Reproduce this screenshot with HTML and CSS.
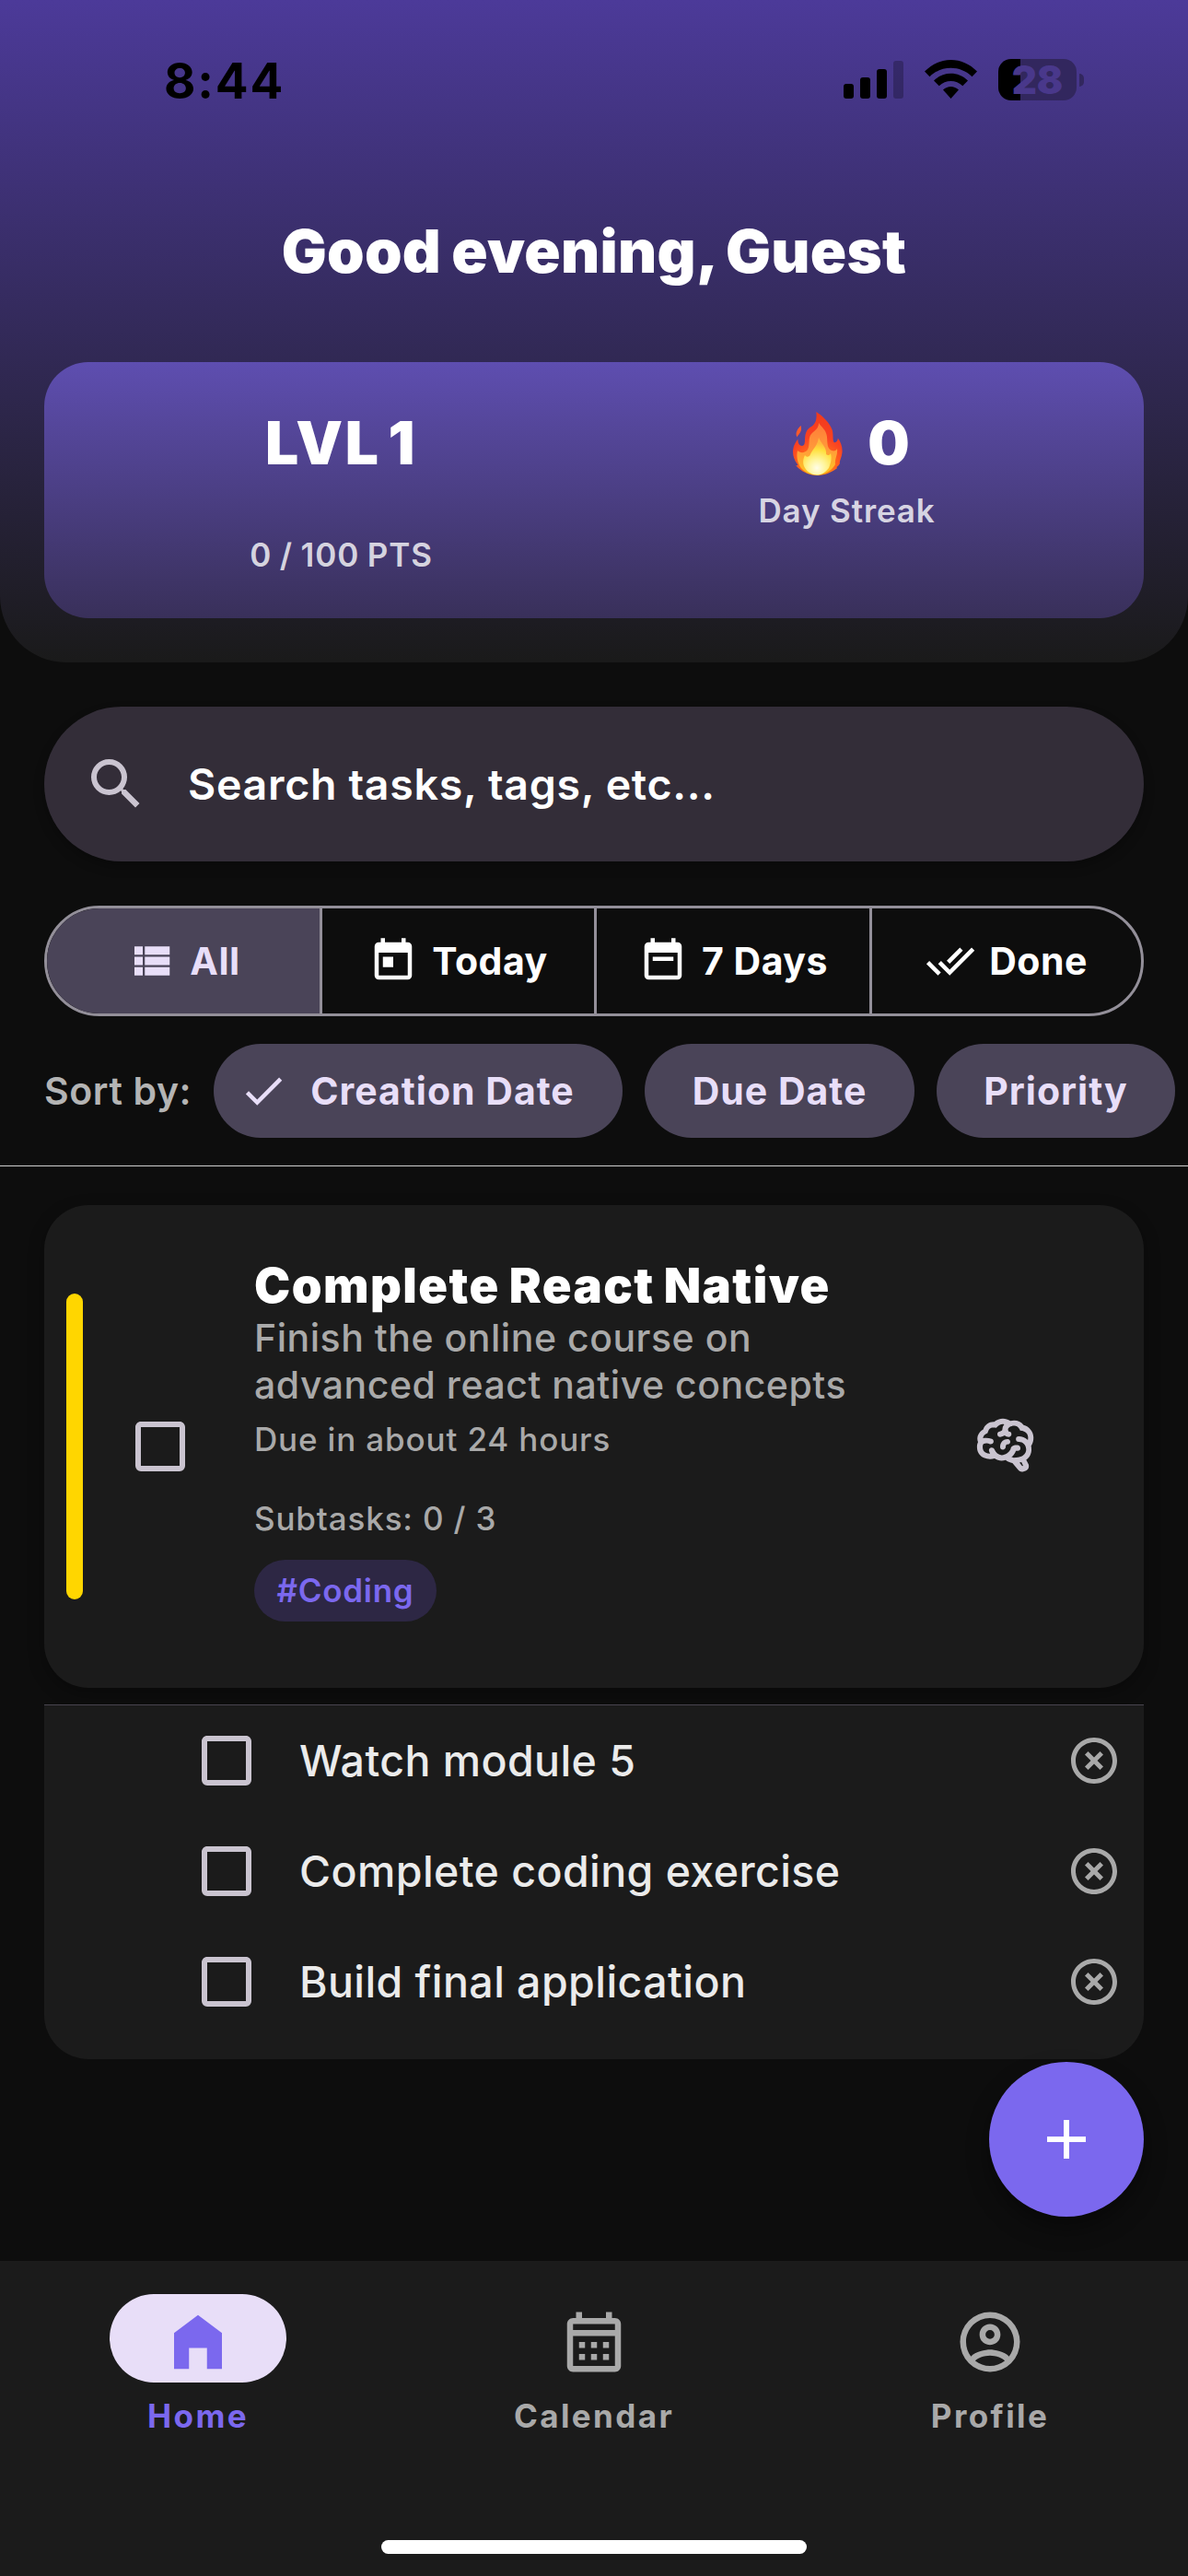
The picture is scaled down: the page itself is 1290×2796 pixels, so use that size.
FILE: index.html
```html
<!DOCTYPE html>
<html lang="en">
<head>
<meta charset="utf-8">
<title>Tasks</title>
<link rel="stylesheet" href="styles.css">
</head>
<body>
<svg class="defs" aria-hidden="true">
  <defs>
    <symbol id="box" viewBox="0 0 24 24"><path d="M19,3H5C3.89,3 3,3.89 3,5V19A2,2 0 0,0 5,21H19A2,2 0 0,0 21,19V5C21,3.89 20.1,3 19,3M19,5V19H5V5H19Z"/></symbol>
    <symbol id="remove" viewBox="0 0 24 24"><path d="M12,20C7.59,20 4,16.41 4,12C4,7.59 7.59,4 12,4C16.41,4 20,7.59 20,12C20,16.41 16.41,20 12,20M12,2C6.47,2 2,6.47 2,12C2,17.53 6.47,22 12,22C17.53,22 22,17.53 22,12C22,6.47 17.53,2 12,2M14.59,8L12,10.59L9.41,8L8,9.41L10.59,12L8,14.59L9.41,16L12,13.41L14.59,16L16,14.59L13.41,12L16,9.41L14.59,8Z"/></symbol>
  </defs>
</svg>
<div class="screen">
  <header class="hero">
    <div class="status">
      <span class="clock">8:44</span>
      <div class="status-icons">
        <svg class="signal" viewBox="0 0 65 41"><rect y="25" width="11" height="16" rx="3"/><rect x="18" y="18" width="11" height="23" rx="3"/><rect x="36" y="9" width="11" height="32" rx="3"/><rect x="54" width="11" height="41" rx="3" opacity=".25"/></svg>
        <svg class="wifi" viewBox="0 0 57 42"><path d="M0 12.6C16-4.200 41-4.200 57 12.600L51.500 18.200C39 5.500 18 5.500 5.500 18.200ZM10 22.500C20.500 12.200 36.500 12.200 47 22.500L41.300 28.300C34 21.200 23 21.200 15.700 28.300ZM20 32.500C25 27.700 32 27.700 37 32.500L28.500 42Z"/></svg>
        <div class="battery"><span class="battery-cell">28</span><span class="battery-tip"></span></div>
      </div>
    </div>
    <h1 class="greeting">Good evening, Guest</h1>
    <section class="stats">
      <div class="stat stat-level">
        <div class="stat-value level">LVL 1</div>
        <div class="stat-label pts">0 / 100 PTS</div>
      </div>
      <div class="stat">
        <div class="stat-value streak">
          <svg class="flame" viewBox="0 0 54 69" role="img" aria-label="fire">
            <defs>
              <radialGradient id="fo" gradientUnits="userSpaceOnUse" cx="27" cy="60" r="60"><stop offset="0" stop-color="#ffb000"/><stop offset=".3" stop-color="#ff6a1c"/><stop offset=".55" stop-color="#fa4222"/><stop offset="1" stop-color="#f03a1c"/></radialGradient>
              <linearGradient id="fm" x1="0" y1="0" x2="0" y2="1"><stop offset="0" stop-color="#ff7a38"/><stop offset=".5" stop-color="#ff9a3a"/><stop offset="1" stop-color="#ffc822"/></linearGradient>
              <radialGradient id="fi" gradientUnits="userSpaceOnUse" cx="26" cy="61" r="27"><stop offset="0" stop-color="#fffde8"/><stop offset=".35" stop-color="#fff59a"/><stop offset=".75" stop-color="#ffdf3c"/><stop offset="1" stop-color="#ffb83c"/></radialGradient>
            </defs>
            <path fill="url(#fo)" d="M25.300 0C33 5 40 12 42.800 20C44 25 43 30 44.500 33C47 34 49 31 48.800 28.500C52 33 54 38 53.500 44C53 50 50 54 51 56C50 58 48.500 59 47.500 60C48 61 48 61.500 47.500 61.500C41 66.500 33 69 26 69C18 69 9 65 3 58C5 58.500 5.500 58 5 57C1 52 -.500 46 .200 41C.800 36 3 33 5.500 29.500C5 34 7 37 10 37C14 36.500 12.500 31 13.500 25C15 18 19 17 22 14.500C25.500 11 26 6 25.300 0Z"/>
            <path fill="url(#fm)" d="M28 12C31 17 36 19 37 27C37.500 34 37 40 42 42C45 43 47 42 48 40C49 47 45 51 46 57C42 64 34 68.500 26 68.500C17 68.500 10 64 7 58C4 52 4 46 5 42C8 45 13 45 16 41C19 36 16 28 20 24C24 20 28 18 28 12Z"/>
            <path fill="url(#fi)" d="M28 28C30 34 37 38 36 46C38 48 40 47 41 45C43 52 40 58 39 61C35 66 31 68.500 26 68.500C20 68.500 14 64 12 59C10 54 12 49 13 47C15 50 18 49 19 46C22 40 27 36 28 28Z"/>
            <path fill="#ff5a2a" d="M8.600 15C9.800 19.500 8.500 22 6.500 24.500C5 26 4.600 27 4.500 27.500C2 23 5 18.500 8.600 15Z"/>
          </svg>
          <span>0</span>
        </div>
        <div class="stat-label day">Day Streak</div>
      </div>
    </section>
  </header>

  <main class="content">
    <div class="search">
      <svg class="i-search" viewBox="0 0 24 24"><path d="M9.500,3A6.500,6.500 0 0,1 16,9.500C16,11.110 15.410,12.590 14.440,13.730L14.710,14H15.500L20.500,19L19,20.500L14,15.500V14.710L13.730,14.440C12.590,15.410 11.110,16 9.500,16A6.500,6.500 0 0,1 3,9.500A6.500,6.500 0 0,1 9.500,3M9.500,5C7,5 5,7 5,9.500C5,12 7,14 9.500,14C12,14 14,12 14,9.500C14,7 12,5 9.500,5Z"/></svg>
      <span class="placeholder">Search tasks, tags, etc...</span>
    </div>

    <div class="segments">
      <div class="segment active"><svg class="i-sm" viewBox="0 0 24 24"><path d="M9,5V9H21V5M9,19H21V15H9M9,14H21V10H9M4,9H8V5H4M4,19H8V15H4M4,14H8V10H4V14Z"/></svg><span>All</span></div>
      <div class="segment"><svg class="i-sm" viewBox="0 0 24 24"><path d="M7,10H12V15H7M19,19H5V8H19M19,3H18V1H16V3H8V1H6V3H5C3.890,3 3,3.900 3,5V19A2,2 0 0,0 5,21H19A2,2 0 0,0 21,19V5A2,2 0 0,0 19,3Z"/></svg><span>Today</span></div>
      <div class="segment"><svg class="i-sm" viewBox="0 0 24 24"><path d="M7,10H17V12H7M19,19H5V8H19M19,3H18V1H16V3H8V1H6V3H5C3.890,3 3,3.900 3,5V19A2,2 0 0,0 5,21H19A2,2 0 0,0 21,19V5A2,2 0 0,0 19,3Z"/></svg><span>7 Days</span></div>
      <div class="segment"><svg class="i-sm" viewBox="0 0 24 24"><path d="M0.410,13.410L6,19L7.410,17.580L1.830,12M22.240,5.580L11.660,16.170L7.500,12L6.070,13.410L11.660,19L23.660,7M18,7L16.590,5.580L10.240,11.930L11.660,13.340L18,7Z"/></svg><span>Done</span></div>
    </div>

    <div class="sort">
      <span class="sort-label">Sort by:</span>
      <div class="chip chip-on"><svg class="i-sm" viewBox="0 0 24 24"><path d="M21,7L9,19L3.500,13.500L4.910,12.090L9,16.170L19.590,5.590L21,7Z"/></svg><span>Creation Date</span></div>
      <div class="chip chip-due"><span>Due Date</span></div>
      <div class="chip chip-pri"><span>Priority</span></div>
    </div>

    <article class="task">
      <span class="priority"></span>
      <svg class="check"><use href="#box"/></svg>
      <div class="task-body">
        <h2 class="task-title">Complete React Native</h2>
        <p class="task-desc">Finish the online course on<br>advanced react native concepts</p>
        <p class="task-meta due">Due in about 24 hours</p>
        <p class="task-meta count">Subtasks: 0 / 3</p>
        <span class="tag">#Coding</span>
      </div>
      <svg class="brain" viewBox="0 0 24 24"><path d="M21.330,12.910C21.420,14.460 20.710,15.950 19.440,16.860L20.210,18.350C20.440,18.800 20.470,19.330 20.270,19.800C20.080,20.270 19.690,20.640 19.210,20.800L18.420,21.050C18.250,21.110 18.060,21.140 17.880,21.140C17.370,21.140 16.890,20.910 16.560,20.500L14.440,18C13.550,17.850 12.710,17.470 12,16.900C11.500,17.050 11,17.130 10.500,17.130C9.620,17.130 8.740,16.860 8,16.340C7.470,16.500 6.930,16.570 6.380,16.560C5.590,16.570 4.810,16.410 4.080,16.110C2.650,15.470 1.700,14.070 1.650,12.500C1.570,11.780 1.690,11.050 2,10.390C1.710,9.640 1.680,8.820 1.930,8.060C2.300,7.110 3,6.320 3.870,5.820C4.450,4.130 6.080,3 7.870,3.120C9.470,1.620 11.920,1.460 13.700,2.750C14.120,2.640 14.560,2.580 15,2.580C16.360,2.550 17.650,3.150 18.500,4.220C20.540,4.750 22,6.570 22.080,8.690C22.130,9.800 21.830,10.890 21.220,11.820C21.290,12.180 21.330,12.540 21.330,12.910M16.330,11.500C16.900,11.570 17.350,12 17.350,12.570A1,1 0 0,1 16.350,13.570H15.720C15.400,14.470 14.840,15.260 14.100,15.860C14.350,15.950 14.610,16 14.870,16.070C20,16 19.400,12.870 19.400,12.820C19.340,11.390 18.140,10.270 16.710,10.330A1,1 0 0,1 15.710,9.330A1,1 0 0,1 16.710,8.330C17.940,8.360 19.120,8.820 20.040,9.630C20.090,9.340 20.120,9.040 20.120,8.740C20.060,7.500 19.500,6.420 17.250,6.210C16,3.250 12.850,4.890 12.850,5.810V5.810C12.820,6.040 13.060,6.530 13.100,6.560A1,1 0 0,1 14.100,7.560C14.100,8.110 13.650,8.560 13.100,8.560V8.560C12.570,8.540 12.070,8.340 11.670,8C11.190,8.310 10.640,8.500 10.070,8.560V8.560C9.500,8.610 9.030,8.210 9,7.660C8.920,7.100 9.330,6.610 9.880,6.560C10.040,6.540 10.820,6.420 10.820,5.790V5.790C10.820,5.130 11.070,4.500 11.500,4C10.580,3.750 9.590,4.080 8.590,5.290C6.750,5 6,5.250 5.450,7.200C4.500,7.670 4,8 3.780,9C4.860,8.780 5.970,8.870 7,9.250C7.500,9.440 7.780,10 7.590,10.540C7.400,11.060 6.820,11.320 6.300,11.130C5.570,10.810 4.750,10.790 4,11.070C3.680,11.340 3.680,11.900 3.680,12.340C3.680,13.080 4.050,13.770 4.680,14.170C5.210,14.440 5.800,14.580 6.390,14.570C6.240,14.310 6.110,14.040 6,13.760C5.810,13.220 6.100,12.630 6.640,12.440C7.180,12.250 7.770,12.540 7.960,13.080C8.360,14.220 9.380,15 10.580,15.130C11.950,15.060 13.170,14.250 13.770,13C14,11.620 15.110,11.500 16.330,11.500M18.330,18.970L17.710,17.670L17,17.830L18,19.080L18.330,18.970M13.680,10.360C13.700,9.830 13.300,9.380 12.770,9.330C12.060,9.290 11.370,9.530 10.840,10C10.270,10.580 9.970,11.380 10,12.190A1,1 0 0,0 11,13.190C11.570,13.190 12,12.740 12,12.190C12,11.920 12.070,11.650 12.230,11.430C12.350,11.330 12.500,11.280 12.680,11.280C13.200,11.310 13.680,10.900 13.680,10.360Z"/></svg>
    </article>

    <ul class="subtasks">
      <li class="subtask"><svg class="check"><use href="#box"/></svg><span>Watch module 5</span><svg class="remove"><use href="#remove"/></svg></li>
      <li class="subtask"><svg class="check"><use href="#box"/></svg><span>Complete coding exercise</span><svg class="remove"><use href="#remove"/></svg></li>
      <li class="subtask"><svg class="check"><use href="#box"/></svg><span>Build final application</span><svg class="remove"><use href="#remove"/></svg></li>
    </ul>
    <button class="fab" aria-label="Add task"><svg viewBox="0 0 24 24"><path d="M19,13H13V19H11V13H5V11H11V5H13V11H19V13Z"/></svg></button>
  </main>

  <footer class="bottom">
    <nav class="tabs">
      <div class="tab selected"><div class="tab-icon"><svg viewBox="0 0 24 24"><path d="M4,21V9L12,3L20,9V21H15V14H9V21H4Z"/></svg></div><span>Home</span></div>
      <div class="tab"><div class="tab-icon"><svg viewBox="0 -1 24 24"><path d="M7 11H9V13H7V11M21 5V19C21 20.110 20.110 21 19 21H5C3.890 21 3 20.100 3 19V5C3 3.900 3.900 3 5 3H6V1H8V3H16V1H18V3H19C20.110 3 21 3.900 21 5M5 7H19V5H5V7M19 19V9H5V19H19M15 13V11H17V13H15M11 13V11H13V13H11M7 15H9V17H7V15M15 17V15H17V17H15M11 17V15H13V17H11Z"/></svg></div><span>Calendar</span></div>
      <div class="tab"><div class="tab-icon"><svg viewBox="0 0 24 24"><path d="M12,2A10,10 0 0,0 2,12A10,10 0 0,0 12,22A10,10 0 0,0 22,12A10,10 0 0,0 12,2M7.070,18.280C7.500,17.380 10.120,16.500 12,16.500C13.880,16.500 16.500,17.380 16.930,18.280C15.570,19.360 13.860,20 12,20C10.140,20 8.430,19.360 7.070,18.280M18.360,16.830C16.930,15.090 13.460,14.500 12,14.500C10.540,14.500 7.070,15.090 5.640,16.830C4.620,15.500 4,13.820 4,12C4,7.590 7.590,4 12,4C16.410,4 20,7.590 20,12C20,13.820 19.380,15.500 18.360,16.830M12,6C10.060,6 8.500,7.560 8.500,9.500C8.500,11.440 10.060,13 12,13C13.940,13 15.500,11.440 15.500,9.500C15.500,7.560 13.940,6 12,6M12,11A1.500,1.500 0 0,1 10.500,9.500A1.500,1.500 0 0,1 12,8A1.500,1.500 0 0,1 13.500,9.500A1.500,1.500 0 0,1 12,11Z"/></svg></div><span>Profile</span></div>
    </nav>
    <div class="home-indicator"></div>
  </footer>
</div>
</body>
</html>
```
FILE: styles.css
```css
* { box-sizing: border-box; margin: 0; padding: 0; }
body { background: #0d0d0d; font-family: Inter, "Liberation Sans", sans-serif; color: #fff; }
svg { display: block; fill: currentColor; flex: none; }
.defs { position: absolute; width: 0; height: 0; }
.screen { width: 1290px; height: 2796px; display: flex; flex-direction: column; overflow: hidden; white-space: nowrap; }

.hero { height: 719px; padding: 0 48px 48px; border-radius: 0 0 72px 72px; background: linear-gradient(#4c3a99, #1a1a1a); display: flex; flex-direction: column; }
.status { height: 174px; padding: 0 65px 0 130px; display: flex; justify-content: space-between; color: #000; }
.clock { margin-top: 58px; font-size: 53px; line-height: 60px; font-weight: 700; letter-spacing: 1.800px; }
.status-icons { display: flex; align-items: flex-start; }
.signal { width: 65px; height: 41px; margin-top: 66px; }
.wifi { width: 57px; height: 42px; margin: 65px 23px 0; }
.battery { margin-top: 64px; display: flex; align-items: center; gap: 3px; }
.battery-cell { width: 85px; height: 45px; border-radius: 14px; background: linear-gradient(90deg, #000 24px, #32275e 24px); color: #49388b; font-size: 42px; line-height: 45px; font-weight: 900; text-align: center; }
.battery-tip { width: 5px; height: 14px; border-radius: 0 5px 5px 0; background: #32275e; }
.greeting { margin-top: 59px; font-size: 65px; line-height: 80px; font-weight: 900; text-align: center; letter-spacing: .300px; word-spacing: -2px; }
.stats { margin-top: auto; height: 278px; padding: 48px 48px 0; border-radius: 48px; background: linear-gradient(#5e4eb0, #39305a); display: grid; grid-template-columns: 1fr 1fr; }
.stat { display: flex; flex-direction: column; align-items: center; }
.stat-value { height: 80px; line-height: 80px; font-size: 64px; font-weight: 900; display: flex; align-items: center; }
.level { letter-spacing: 2.500px; word-spacing: -7px; }
.streak { gap: 27px; margin-left: 10px; }
.flame { width: 54px; height: 69px; }
.stat-label { margin-top: 9px; font-size: 35px; line-height: 48px; font-weight: 560; color: rgba(255,255,255,.8); letter-spacing: .850px; }
.pts { margin-top: 57px; word-spacing: -1px; }

.content { position: relative; height: 1735px; padding-top: 48px; display: flex; flex-direction: column; }
.search { margin: 0 48px; height: 168px; padding-left: 48px; border-radius: 84px; background: #332d38; box-shadow: 0 6px 12px rgba(0,0,0,.25); display: flex; align-items: center; }
.i-search { width: 72px; height: 72px; margin-left: -6px; color: #cac4d0; }
.placeholder { margin-left: 42px; font-size: 46.500px; font-weight: 570; letter-spacing: .700px; }
.segments { margin: 48px 48px 0; height: 120px; border: 3px solid #938f99; border-radius: 60px; overflow: hidden; display: grid; grid-template-columns: 299px 298px 299px 1fr; }
.segment { display: flex; align-items: center; justify-content: center; gap: 15px; font-size: 41px; font-weight: 680; letter-spacing: .500px; border-right: 3px solid #938f99; }
.segment:last-child { border-right: 0; }
.active { background: #4a4458; color: #e8def8; }
.i-sm { width: 54px; height: 54px; }
.sort { height: 163px; padding: 30px 0 0 48px; border-bottom: 1px solid #d0d0d0; display: flex; font-size: 41px; line-height: 102px; font-weight: 670; color: #e8def8; letter-spacing: 1px; }
.sort-label { width: 184px; flex: none; font-weight: 600; color: #b4b4b4; letter-spacing: .600px; }
.chip { height: 102px; margin-right: 24px; border-radius: 51px; background: #4a4458; display: flex; align-items: center; justify-content: center; flex: none; }
.chip-on { width: 444px; gap: 24px; padding-right: 25px; }
.chip-due { width: 293px; }
.chip-pri { width: 259px; margin-right: 0; }

.task { margin: 42px 48px 0; height: 524px; padding: 0 114px 0 24px; border-radius: 48px; background: #1b1b1b; box-shadow: 0 6px 18px rgba(0,0,0,.3); display: flex; align-items: center; }
.priority { width: 18px; height: 332px; border-radius: 9px; background: #ffd600; }
.check { width: 72px; height: 72px; color: #cac4d0; }
.task .check { margin-left: 48px; }
.task-body { align-self: flex-start; padding-top: 54px; margin-left: 66px; flex: 1; }
.task-title { font-size: 52.500px; line-height: 66px; font-weight: 880; letter-spacing: 1.450px; word-spacing: -2px; }
.task-desc { margin-top: -1px; font-size: 41px; line-height: 51px; font-weight: 520; color: #a9a9a9; letter-spacing: .520px; }
.task-meta { font-size: 35px; line-height: 48px; font-weight: 530; color: #a9a9a9; letter-spacing: .850px; }
.due { margin-top: 9px; }
.count { margin-top: 38px; }
.tag { display: inline-block; margin-top: 21px; width: 198px; height: 67px; border-radius: 34px; background: #2d2744; color: #7b68ee; font-size: 35px; line-height: 67px; font-weight: 560; letter-spacing: .700px; text-align: center; }
.brain { width: 72px; height: 72px; color: #cac4d0; }
.subtasks { list-style: none; margin: 18px 48px 0; height: 385px; border-top: 1px solid #49454f; border-radius: 0 0 48px 48px; background: #1b1b1b; }
.subtask { height: 120px; padding: 0 24px 0 162px; display: flex; align-items: center; font-size: 46.500px; font-weight: 545; color: #ebebeb; letter-spacing: .420px; }
.subtask span { margin-left: 43px; flex: 1; }
.remove { width: 60px; height: 60px; color: #a9a9a9; }
.fab { position: absolute; right: 48px; bottom: 48px; width: 168px; height: 168px; border: 0; border-radius: 50%; background: #7b68ee; color: #fff; display: flex; align-items: center; justify-content: center; box-shadow: 0 12px 24px rgba(0,0,0,.4); }
.fab svg { width: 72px; height: 72px; }

.bottom { height: 342px; background: #1b1b1b; display: flex; flex-direction: column; justify-content: space-between; align-items: center; padding: 36px 0 24px; }
.tabs { width: 100%; display: grid; grid-template-columns: repeat(3, 1fr); color: #a9a9a9; }
.tab { display: flex; flex-direction: column; align-items: center; gap: 12px; font-size: 35px; line-height: 48px; font-weight: 680; letter-spacing: 2.400px; }
.tab-icon { width: 192px; height: 96px; border-radius: 48px; padding-top: 13px; display: flex; justify-content: center; }
.tab-icon svg { width: 78px; height: 78px; }
.selected { color: #7b68ee; }
.selected .tab-icon { background: #e8def8; }
.home-indicator { width: 462px; height: 15px; border-radius: 8px; background: #fff; }
```
